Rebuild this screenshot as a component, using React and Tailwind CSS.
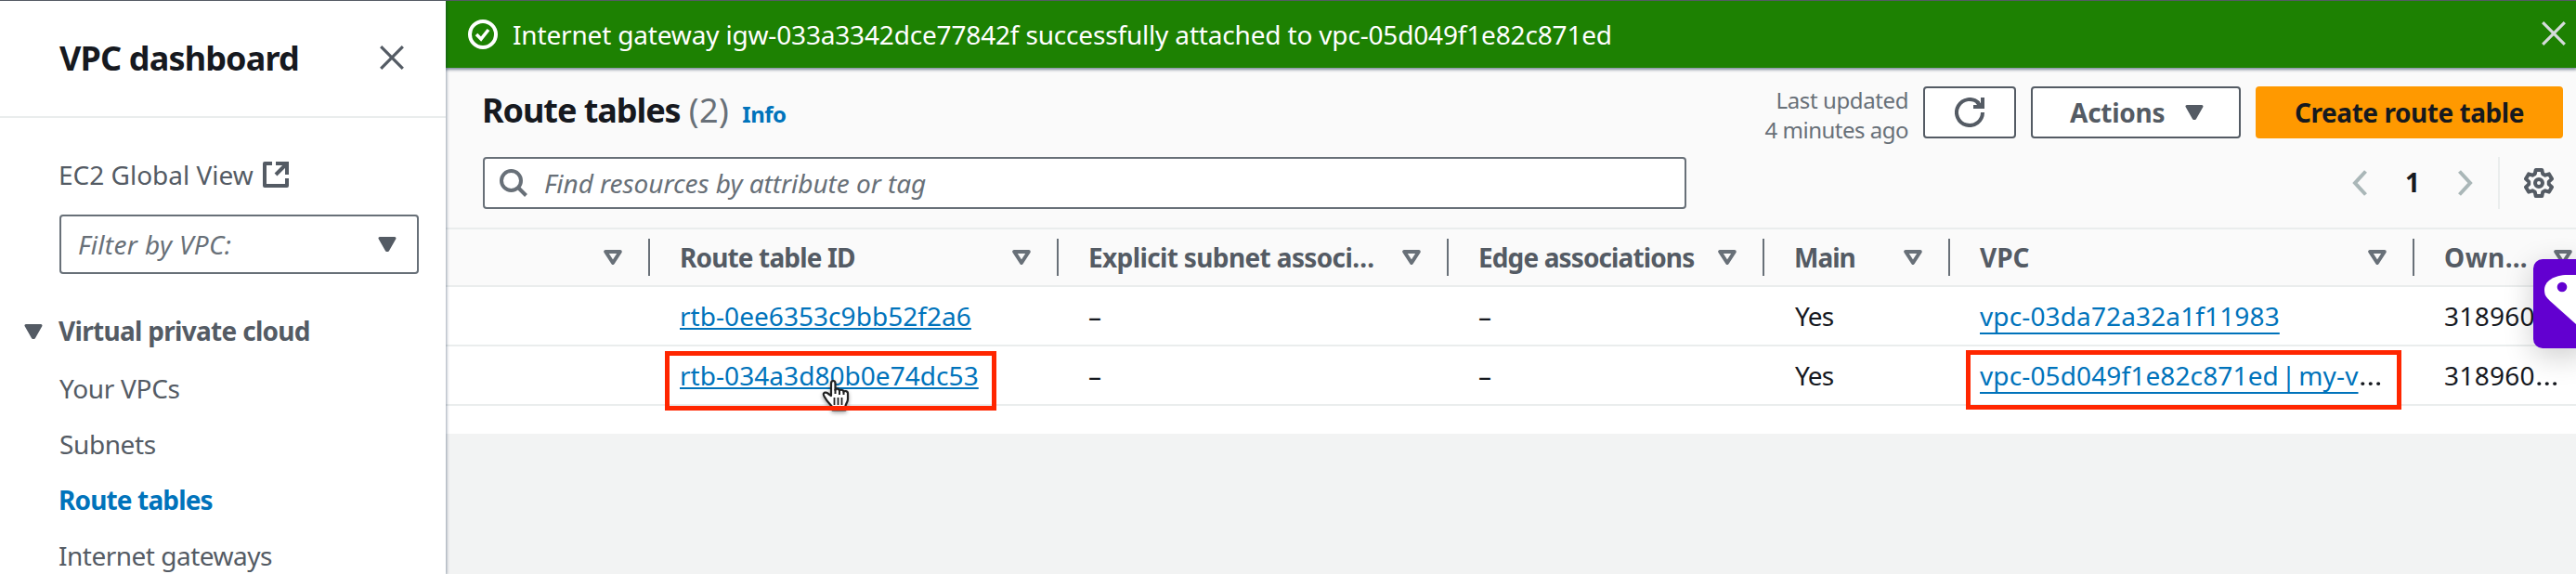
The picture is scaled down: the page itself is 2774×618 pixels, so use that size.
const SolidCaret = ({ className = "" }) => (
  <svg viewBox="0 0 20 16" className={"h-4 w-5 shrink-0 " + className}>
    <path d="M2 1.5h16L10.600 14.500h-1.200z" fill="#545b64" stroke="#545b64" strokeWidth="3" strokeLinejoin="round" />
  </svg>
);

const SortCaret = () => (
  <svg viewBox="0 0 20 16" className="h-4 w-5 shrink-0">
    <path d="M2.200 2h15.600L10 14z" fill="none" stroke="#687078" strokeWidth="4" strokeLinejoin="round" />
  </svg>
);

const CloseIcon = ({ className = "" }) => (
  <svg viewBox="0 0 26 26" className={"h-[26px] w-[26px] shrink-0 " + className}>
    <path d="M1.200 1.200l23.600 23.600M24.800 1.200L1.200 24.800" fill="none" stroke="currentColor" strokeWidth="3.200" />
  </svg>
);

const ExternalIcon = () => (
  <svg viewBox="0 0 28 28" className="h-7 w-7 shrink-0" fill="none" stroke="#545b64" strokeWidth="4">
    <path d="M10 2H2v24h24v-8" strokeLinejoin="round" />
    <path d="M14 2h12v12M26 2L14 14" />
  </svg>
);

const CheckIcon = () => (
  <svg viewBox="0 0 32 32" className="h-8 w-8 shrink-0" fill="none" stroke="#fff" strokeWidth="4">
    <circle cx="16" cy="16" r="14" />
    <path d="M9 16l5 5 8-10" strokeWidth="3.600" />
  </svg>
);

const SearchIcon = () => (
  <svg viewBox="0 0 30 30" className="h-[30px] w-[30px] shrink-0" fill="none" stroke="#687078" strokeWidth="4">
    <circle cx="12.500" cy="12.500" r="10.500" />
    <path d="M19.500 19.500l9 9" />
  </svg>
);

const RefreshIcon = () => (
  <svg viewBox="0 0 32 32" className="h-8 w-8 shrink-0" fill="none" stroke="#545b64" strokeWidth="4">
    <path d="M30 16a14 14 0 1 1-4.200-10" />
    <path d="M30 0v10H20M24 5l5 5" />
  </svg>
);

const Chevron = ({ d }) => (
  <svg viewBox="0 0 16 28" className="h-7 w-4 shrink-0" fill="none" stroke="#aab7b8" strokeWidth="4">
    <path d={d} />
  </svg>
);

const GearIcon = () => (
  <svg viewBox="0 0 32 32" className="h-8 w-8 shrink-0" fill="none" stroke="#545b64" strokeWidth="4" strokeLinejoin="round">
    <path d="M12.700 2h6.600l.9 4.200 2.700 1.500 4.100-1.300 3 5.200-3.200 3v2.800l3.200 3-3 5.200-4.100-1.300-2.700 1.500-.9 4.200h-6.600l-.9-4.200-2.700-1.500L5 25.600l-3-5.200 3.200-3v-2.800L2 11.600l3-5.200 4.100 1.300 2.700-1.500z" />
    <circle cx="16" cy="16" r="4" />
  </svg>
);

const HandCursor = () => (
  <svg viewBox="0 0 32 36" className="absolute left-[404px] top-[407px] h-9 w-8 drop-shadow-[0_2px_2px_rgba(0,0,0,0.35)]">
    <path
      d="M11 18V5c0-2 1-3 2.300-3S15.500 3 15.500 5v7c0-2 4.500-2 4.500 1 0-2 4.500-1.600 4.500 1 .5-1.600 4.500-1.200 4.500 1.500v6c0 4-2.500 5-2.500 8v4H12.500v-3C10 27 7 25 5 21c-1.500-2.500-3-4-2-5.500s3.500-1.200 5 .5z"
      fill="#fff"
      stroke="#222"
      strokeWidth="2.200"
      strokeLinejoin="round"
    />
    <path d="M14.500 20v8M18.500 20v8M22.500 20v8" stroke="#222" strokeWidth="1.800" />
    <path d="M15.500 11v5M20 13v4M24.500 14v3" stroke="#222" strokeWidth="2" />
  </svg>
);

const columns = [
  { label: "", col: "w-[220px]" },
  { label: "Route table ID", col: "w-[440px]", tracking: "tracking-[-0.85px]" },
  { label: "Explicit subnet associ…", col: "w-[420px]", tracking: "tracking-[-0.63px]" },
  { label: "Edge associations", col: "w-[340px]", tracking: "tracking-[-0.88px]" },
  { label: "Main", col: "w-[200px]", tracking: "tracking-[-1px]" },
  { label: "VPC", col: "w-[500px]", tracking: "tracking-[0px]" },
  { label: "Own…", col: "w-[200px]", tracking: "tracking-[0.5px]" },
];

const rows = [
  { id: "rtb-0ee6353c9bb52f2a6", vpc: "vpc-03da72a32a1f11983", vpcTracking: "tracking-[0.13px]", cut: false },
  { id: "rtb-034a3d80b0e74dc53", vpc: "vpc-05d049f1e82c871ed | my-v", vpcTracking: "tracking-[0.13px] [word-spacing:-4.5px]", cut: true },
];

const navItems = [
  { label: "Your VPCs", style: "pl-px tracking-[-0.3px]" },
  { label: "Subnets", style: "pl-px tracking-[-0.4px]" },
  { label: "Route tables", style: "font-bold text-[#0073bb] tracking-[-0.85px]" },
  { label: "Internet gateways", style: "tracking-[-0.5px]" },
];

const link = "text-[#0073bb] underline decoration-2 [text-decoration-skip-ink:none]";

function Sidebar() {
  return (
    <aside className="relative z-10 w-[480px] shrink-0 bg-white text-[#545b64] shadow-[0_0_3px_1px_rgba(0,28,60,0.4)]">
      <div className="flex h-[126px] items-center justify-between border-b-2 border-[#eaeded] pl-16 pr-[45px]">
        <h2 className="text-[36px] font-bold tracking-[-0.85px] text-[#16191f]">VPC dashboard</h2>
        <CloseIcon className="-mt-0.5" />
      </div>
      <div className="pl-16 pr-[29px] pt-[41px]">
        <div className="flex h-10 items-center gap-[10px]">
          <span className="-ml-px">EC2 Global View</span>
          <ExternalIcon />
        </div>
        <div className="mt-[23px] flex h-16 items-center justify-between rounded-[4px] border-2 border-[#687078] pl-[18px] pr-[22px]">
          <span className="italic tracking-[0.35px] text-[#687078]">Filter by VPC:</span>
          <SolidCaret />
        </div>
      </div>
      <div className="mt-[41px] flex h-10 items-center gap-[17px] pl-[26px]">
        <SolidCaret className="mt-0.5" />
        <span className="font-bold tracking-[-0.7px]">Virtual private cloud</span>
      </div>
      <nav className="mt-3 flex flex-col pl-[63px]">
        {navItems.map((n) => (
          <a key={n.label} className={"h-[60px] leading-[60px] " + n.style}>
            {n.label}
          </a>
        ))}
      </nav>
    </aside>
  );
}

function Toolbar() {
  return (
    <div className="flex h-[174px] flex-col gap-5 border-b-2 border-[#eaeded] bg-[#fafafa] pl-10 pr-[14px] pt-5">
      <div className="flex h-14 items-center justify-between">
        <div className="-ml-px -mt-1 flex items-baseline">
          <h1 className="text-[36px] font-bold tracking-[-1.05px] text-[#16191f]">Route tables</h1>
          <span className="ml-[9px] text-[36px] tracking-[0.5px] text-[#687078]">(2)</span>
          <a className="ml-[14px] text-[24px] font-bold tracking-[-0.5px] text-[#0073bb]">Info</a>
        </div>
        <div className="flex items-center gap-4 font-bold text-[#545b64]">
          <div className="mt-1.5 text-right text-[24px] font-normal leading-8 text-[#687078]">
            <div className="tracking-[-0.4px]">Last updated</div>
            <div className="tracking-[-0.5px]">4 minutes ago</div>
          </div>
          <button className="flex h-14 w-[100px] items-center justify-center rounded-[4px] border-2 border-[#545b64] bg-white">
            <RefreshIcon />
          </button>
          <button className="flex h-14 w-[226px] items-center justify-between rounded-[4px] border-2 border-[#545b64] bg-white pl-10 pr-[38px]">
            <span className="-mt-px tracking-[-0.25px]">Actions</span>
            <SolidCaret />
          </button>
          <button className="flex h-14 w-[331px] items-center justify-center rounded-[4px] bg-[#ff9900] pb-px tracking-[-0.45px] text-[#16191f]">
            Create route table
          </button>
        </div>
      </div>
      <div className="flex h-14 items-center justify-between">
        <div className="flex h-14 w-[1296px] items-center gap-[18px] rounded-[4px] border-2 border-[#687078] bg-white pl-4">
          <SearchIcon />
          <span className="italic tracking-[-0.05px] text-[#687078]">Find resources by attribute or tag</span>
        </div>
        <div className="flex h-14 items-center pr-[10px]">
          <Chevron d="M14.500 1.500L3 14l11.500 12.500" />
          <span className="mx-[41px] -mt-0.5 w-4 text-center font-bold text-[#16191f]">1</span>
          <Chevron d="M1.500 1.500L13 14 1.500 26.500" />
          <div className="ml-[27px] mr-[26px] h-14 w-0.5 bg-[#eaeded]" />
          <GearIcon />
        </div>
      </div>
    </div>
  );
}

function Table() {
  return (
    <div className="bg-white pb-[30px] text-[#16191f]">
      <div className="flex h-[62px] w-[2320px] border-b-2 border-[#eaeded] bg-[#fafafa] font-bold text-[#545b64]">
        {columns.map((c, i) => (
          <div key={i} className={"flex shrink-0 items-center justify-between pl-8 " + c.col}>
            <span className={"-mt-px " + (c.tracking || "")}>{c.label}</span>
            <div className="flex items-center gap-7">
              <SortCaret />
              <div className="h-10 w-0.5 bg-[#687078]" />
            </div>
          </div>
        ))}
      </div>
      {rows.map((r) => (
        <div key={r.id} className="flex h-16 w-[2320px] border-b-2 border-[#eaeded] leading-[62px]">
          <div className="w-[220px] shrink-0" />
          <div className="w-[440px] shrink-0 pl-8">
            <a className={link + " underline-offset-2 tracking-[0.05px]"}>{r.id}</a>
          </div>
          <div className="w-[420px] shrink-0 pl-8">–</div>
          <div className="w-[340px] shrink-0 pl-8">–</div>
          <div className="w-[200px] shrink-0 pl-[33px] tracking-[-0.8px]">Yes</div>
          <div className="w-[500px] shrink-0 pl-8">
            <a className={link + " underline-offset-[7px] " + r.vpcTracking}>{r.vpc}</a>
            {r.cut && <span className="inline-block origin-left scale-x-[1.15]">…</span>}
          </div>
          <div className="w-[200px] shrink-0 pl-8 tracking-[0.3px]">
            318960<span className="inline-block origin-left scale-x-[1.15]">…</span>
          </div>
        </div>
      ))}
    </div>
  );
}

export default function App() {
  return (
    <div className="flex h-[618px] w-[2774px] flex-col overflow-hidden bg-[#f2f3f3] font-['Noto_Sans','Open_Sans',sans-serif] text-[28px]">
      <div className="relative z-20 h-px shrink-0 bg-[#545b64]" />
      <div className="flex min-h-0 flex-1">
        <Sidebar />
        <main className="relative min-w-0 flex-1 overflow-hidden">
          <div className="relative flex h-[72px] items-center justify-between bg-[#1d8102] pl-6 pr-[11px] text-white shadow-[0_1px_3px_1px_rgba(0,28,60,0.5)]">
            <div className="flex items-center gap-4">
              <CheckIcon />
              <span className="-mt-px tracking-[-0.17px]">
                Internet gateway igw-033a3342dce77842f successfully attached to vpc-05d049f1e82c871ed
              </span>
            </div>
            <CloseIcon className="-mt-0.5 text-[#d5dbdb]" />
          </div>
          <Toolbar />
          <Table />
          <HandCursor />
          <div className="absolute left-[236px] top-[377px] h-16 w-[357px] border-[5px] border-[#ff2600]" />
          <div className="absolute left-[1637px] top-[376px] h-16 w-[469px] border-[5px] border-[#ff2600]" />
          <div className="absolute left-[2248px] top-[278px] h-24 w-[60px] rounded-[10px] bg-[#6200d0] shadow-[0_8px_32px_rgba(0,0,0,0.2)]">
            <svg viewBox="0 0 60 96" className="h-24 w-[60px]">
              <path d="M60 17H37C22 17 12 24 12 33c0 6 2 8 6 12l28 25 14 12z" fill="#fff" />
              <circle cx="31" cy="30" r="5.300" fill="#6200d0" />
            </svg>
          </div>
        </main>
      </div>
    </div>
  );
}
